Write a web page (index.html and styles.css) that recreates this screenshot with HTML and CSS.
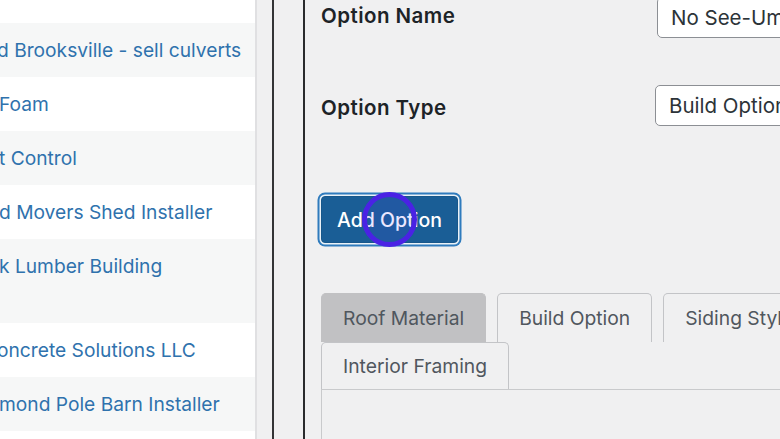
FILE: index.html
```html
<!DOCTYPE html>
<html lang="en">
<head>
<meta charset="utf-8">
<title>Options</title>
<link rel="stylesheet" href="styles.css">
</head>
<body>
<div class="list">
  <div class="row"></div>
  <div class="row alt"><a href="#" class="cut">d Brooksville - sell culverts</a></div>
  <div class="row"><a href="#">Foam</a></div>
  <div class="row alt"><a href="#">t Control</a></div>
  <div class="row"><a href="#">d Movers Shed Installer</a></div>
  <div class="row alt tall"><a href="#">k Lumber Building</a></div>
  <div class="row"><a href="#" class="cut">oncrete Solutions LLC</a></div>
  <div class="row alt"><a href="#">mond Pole Barn Installer</a></div>
  <div class="row"></div>
</div>
<div class="gutter"></div>
<div class="gutter2"></div>
<main class="main">
  <div class="field first">
    <label class="label" for="oname">Option Name</label>
    <input class="control" id="oname" type="text" value="No See-Um Screen">
  </div>
  <div class="field second">
    <label class="label" for="otype">Option Type</label>
    <select class="control select" id="otype"><option>Build Option</option></select>
  </div>
  <div class="actions">
    <button class="btn" type="button">Add Option</button>
    <span class="cursor"></span>
  </div>
  <div class="tabs">
    <span class="tab active">Roof Material</span>
    <span class="tab">Build Option</span>
    <span class="tab">Siding Style</span>
    <span class="tab">Interior Framing</span>
  </div>
  <div class="panel"></div>
</main>
</body>
</html>
```
FILE: styles.css
```css
html, body {
  margin: 0;
  padding: 0;
}
body {
  width: 780px;
  height: 439px;
  overflow: hidden;
  display: flex;
  background: #f0f0f1;
  font-family: Inter, "Liberation Sans", sans-serif;
  color: #1d2327;
}
.list {
  width: 255px;
  flex: none;
  background: #fff;
  border-right: 2px solid #e0e0e2;
  overflow: hidden;
  margin-top: -31px;
  height: 470px;
}
.row {
  height: 30px;
  padding: 12px 0;
  background: #fff;
  white-space: nowrap;
}
.row.alt {
  background: #f6f7f7;
}
.row.tall {
  padding-bottom: 42px;
}
.row a {
  display: block;
  font-size: 19.2px;
  line-height: 30px;
  color: #2f72ad;
  text-decoration: none;
  margin-left: -1px;
}
.row a.cut {
  margin-left: -3px;
}
.gutter {
  width: 15px;
  flex: none;
  border-right: 2px solid #333436;
}
.gutter2 {
  width: 29px;
  flex: none;
  border-right: 2px solid #2a2b2d;
}
.main {
  flex: none;
  width: 900px;
  padding-left: 16px;
  display: flex;
  flex-direction: column;
}
.field {
  display: flex;
  align-items: center;
  height: 41px;
}
.field.first {
  margin-top: -3px;
}
.field.second {
  margin-top: 47px;
}
.label {
  width: 334px;
  flex: none;
  font-size: 20.5px;
  font-weight: 600;
  letter-spacing: 0.45px;
  color: #1d2327;
  margin-top: -4px;
}
.second .label {
  margin-top: 3px;
}
.control {
  box-sizing: border-box;
  height: 41px;
  width: 300px;
  border: 1px solid #8c8f94;
  border-radius: 5px;
  background: #fff;
  font-family: inherit;
  font-size: 20.5px;
  color: #2c3338;
  padding: 0 13px;
  margin: 0 0 0 2px;
}
.select {
  appearance: none;
  -webkit-appearance: none;
  margin-left: 0;
  padding-left: 13px;
}
.actions {
  position: relative;
  margin-top: 70px;
  height: 47px;
  align-self: flex-start;
}
.btn {
  box-sizing: border-box;
  height: 47px;
  width: 137px;
  background: #1a5e96;
  border: 1px solid #17578b;
  border-radius: 4px;
  color: #fff;
  font-family: inherit;
  font-size: 19.5px;
  font-weight: 500;
  padding: 0;
  box-shadow: 0 0 0 1.5px #eaf1f7, 0 0 0 3.5px #2f7bbd;
}
.cursor {
  position: absolute;
  left: 41px;
  top: -4px;
  width: 45px;
  height: 45px;
  border: 5px solid #4a22e4;
  border-radius: 50%;
  background: rgba(90, 60, 255, 0.12);
  pointer-events: none;
}
.tabs {
  margin-top: 50px;
  width: 600px;
  display: flex;
  flex-wrap: wrap;
}
.tab {
  box-sizing: border-box;
  height: 49px;
  padding: 0 21px;
  display: flex;
  align-items: center;
  font-size: 19.3px;
  color: #50575e;
  background: #f0f0f1;
  border: 1px solid #c3c4c7;
  border-bottom: none;
  border-radius: 5px 5px 0 0;
  margin-right: 11px;
  white-space: nowrap;
}
.tab.active {
  background: #c1c1c3;
  border-color: #c1c1c3;
}
.tab:last-child {
  height: 47px;
}
.panel {
  flex: 1;
  border-top: 1px solid #c9cacc;
  border-left: 1px solid #c9cacc;
}
```
